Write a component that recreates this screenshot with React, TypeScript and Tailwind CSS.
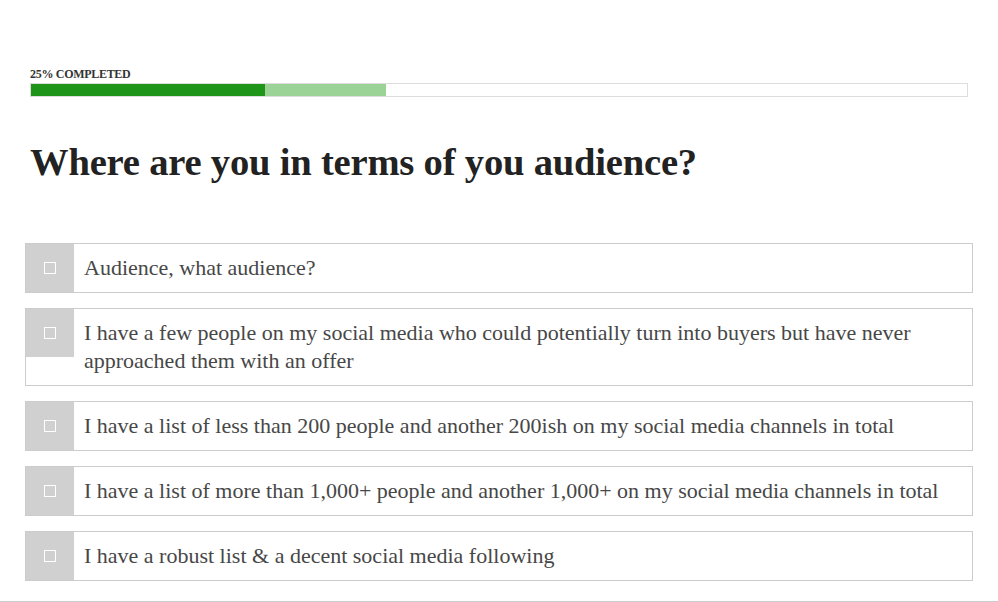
import React from 'react';

const options = [
  'Audience, what audience?',
  'I have a few people on my social media who could potentially turn into buyers but have never approached them with an offer',
  'I have a list of less than 200 people and another 200ish on my social media channels in total',
  'I have a list of more than 1,000+ people and another 1,000+ on my social media channels in total',
  'I have a robust list & a decent social media following',
];

const serif = { fontFamily: '"Liberation Serif", "DejaVu Serif", serif' };

const OptionRow: React.FC<{ label: string }> = ({ label }) => (
  <label className="flex items-start border border-[#cccccc] bg-white cursor-pointer">
    <div className="w-[48px] h-[48px] shrink-0 bg-[#d0d0d0] flex items-center justify-center">
      <span className="block w-[12px] h-[12px] border border-white" />
    </div>
    <div className="pl-[10px] pr-4 py-[10px] text-[22px] leading-[28px] text-[#474747]">
      {label}
    </div>
  </label>
);

export default function App() {
  return (
    <div className="w-full h-[602px] bg-white border-b border-[#cccccc] overflow-hidden" style={serif}>
      <div className="px-[25px] pt-[67px]">
        <div className="mx-[5px]">
          <div className="text-[12px] font-bold text-[#333333] leading-[14px] tracking-[-0.3px]">
            25% COMPLETED
          </div>
          <div className="mt-[2px] h-[14px] border border-[#dddddd] flex">
            <div className="h-full w-[234px] bg-[#1e9418]" />
            <div className="h-full w-[121px] bg-[#9bd396]" />
          </div>
          <h1 className="mt-[39px] text-[38.6px] leading-[52px] font-bold text-[#222222] tracking-[-0.2px]">
            Where are you in terms of you audience?
          </h1>
        </div>
        <div className="mt-[55px] flex flex-col gap-[15px]">
          {options.map((o) => (
            <OptionRow key={o} label={o} />
          ))}
        </div>
      </div>
    </div>
  );
}
